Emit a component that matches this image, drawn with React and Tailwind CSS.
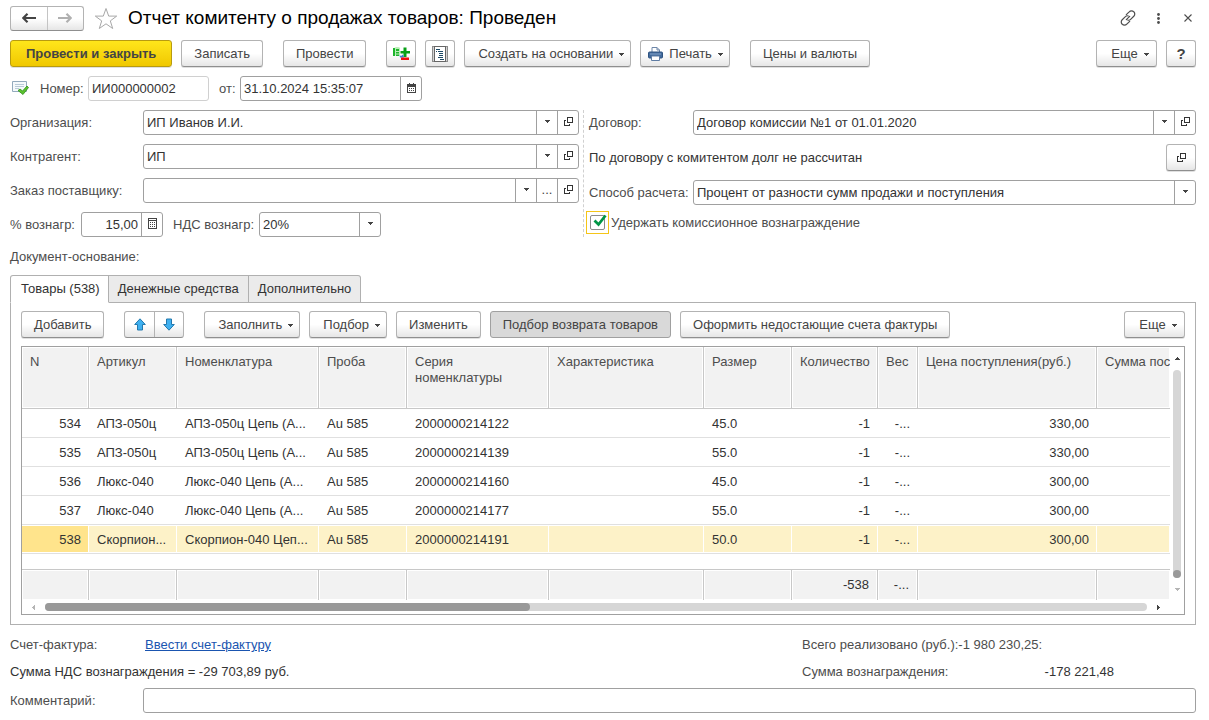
import { useState } from 'react';
import clsx from 'clsx';

const COLUMNS = [
    { key: 'n', title: 'N', width: 'w-[67px]', align: 'text-right' },
    { key: 'article', title: 'Артикул', width: 'w-[88px]' },
    { key: 'item', title: 'Номенклатура', width: 'w-[142px]' },
    { key: 'probe', title: 'Проба', width: 'w-[88px]' },
    { key: 'series', title: 'Серия номенклатуры', width: 'w-[142px]' },
    { key: 'feature', title: 'Характеристика', width: 'w-[155px]' },
    { key: 'size', title: 'Размер', width: 'w-[88px]' },
    { key: 'qty', title: 'Количество', width: 'w-[86px]', align: 'text-right' },
    { key: 'weight', title: 'Вес', width: 'w-[40px]', align: 'text-right' },
    { key: 'price', title: 'Цена поступления(руб.)', width: 'w-[179px]', align: 'text-right' },
    { key: 'sum', title: 'Сумма поступления', width: '' },
];

const ROWS = [
    { n: '534', article: 'АПЗ-050ц', item: 'АПЗ-050ц Цепь (А...', probe: 'Au 585', series: '2000000214122', size: '45.0', qty: '-1', weight: '-...', price: '330,00' },
    { n: '535', article: 'АПЗ-050ц', item: 'АПЗ-050ц Цепь (А...', probe: 'Au 585', series: '2000000214139', size: '55.0', qty: '-1', weight: '-...', price: '330,00' },
    { n: '536', article: 'Люкс-040', item: 'Люкс-040 Цепь (А...', probe: 'Au 585', series: '2000000214160', size: '45.0', qty: '-1', weight: '-...', price: '300,00' },
    { n: '537', article: 'Люкс-040', item: 'Люкс-040 Цепь (А...', probe: 'Au 585', series: '2000000214177', size: '55.0', qty: '-1', weight: '-...', price: '300,00' },
    { n: '538', article: 'Скорпион...', item: 'Скорпион-040 Цеп...', probe: 'Au 585', series: '2000000214191', size: '50.0', qty: '-1', weight: '-...', price: '300,00' },
];

const TOTALS = { qty: '-538', weight: '-...' };

const TABS = ['Товары (538)', 'Денежные средства', 'Дополнительно'];

/* ---------- icons ---------- */

function Caret({ className = '' }) {
    return (
        <svg width="5" height="3" viewBox="0 0 5 3" className={clsx('shrink-0', className)} shapeRendering="crispEdges" aria-hidden="true">
            <path d="M0 0h5v1H0zM1 1h3v1H1zM2 2h1v1H2z" fill="currentColor" />
        </svg>
    );
}

function OpenIcon() {
    return (
        <svg width="9" height="9" viewBox="0 0 9 9" fill="none" stroke="#333" className="shrink-0" shapeRendering="crispEdges" aria-hidden="true">
            <path d="M3.5 0.5h5v5h-5zM2 3.5H0.5v5h5V7" />
        </svg>
    );
}

function ArrowIcon({ flip, color }) {
    return (
        <svg width="14" height="10" viewBox="0 0 14 10" className={flip ? 'rotate-180' : ''} aria-hidden="true">
            <path d="M5.5 0.8L1.3 5l4.2 4.2M1.6 5H14" fill="none" stroke={color} strokeWidth="2.2" />
        </svg>
    );
}

function StarIcon() {
    return (
        <svg width="24" height="23" viewBox="0 0 24 23" aria-hidden="true">
            <path d="M12 1.5l2.7 7.6h8l-6.4 4.8 2.4 7.6L12 16.8l-6.7 4.7 2.4-7.6L1.3 9.1h8z" fill="#fff" stroke="#a8a8a8" />
        </svg>
    );
}

function LinkIcon() {
    return (
        <svg width="16" height="16" viewBox="0 0 16 16" fill="none" stroke="#4d4d4d" strokeWidth="1.2" strokeLinecap="round" aria-hidden="true">
            <path d="M6.3 4.7l2.9-2.9a3.1 3.1 0 0 1 4.6 0a3.1 3.1 0 0 1 0 4.5L10.6 9.4a2.6 2.6 0 0 1-2.9.6" />
            <path d="M9.7 11.3l-2.9 2.9a3.1 3.1 0 0 1-4.6 0a3.1 3.1 0 0 1 0-4.5L5.4 6.600a2.6 2.6 0 0 1 2.9-.6" />
            <path d="M6.3 9.7l3.4-3.4" />
        </svg>
    );
}

function DtKtIcon() {
    return (
        <svg width="17" height="15" viewBox="0 0 17 15" className="shrink-0" aria-hidden="true">
            <path d="M1 2.5c0-1.5 5-2 6-.5v7.5H1z" fill="#b9eeb6" />
            <path d="M0 2h2v8H0zM3 3h3v2H3zM3 6h3v1.500H3zM3 8.500h3V10H3z" fill="#1cb52b" />
            <path d="M10.500 1.500h3V5H17v2.600h-3.500V11h-3V7.600H7.500V5h3z" fill="#0aa018" />
            <path d="M6.500 9l1.500 1 2-1.500 1 3H7z" fill="#3d7fd0" />
            <path d="M8 11.500h8V14H8z" fill="#f01010" />
        </svg>
    );
}

function ReportIcon() {
    return (
        <svg width="16" height="16" viewBox="0 0 16 16" fill="none" className="shrink-0" shapeRendering="crispEdges" aria-hidden="true">
            <path d="M0.5 0.5h15v15h-15z" fill="#d4d4d4" stroke="#8c8c8c" />
            <path d="M2.5 0.5h11v15h-11z" fill="#fff" stroke="#666" />
            <path d="M4 3.5h4M6 5.5h5M7 7.5h4M7 9.5h4M6 11.5h5M8 13.5h4M4 5.5h1" stroke="#1d4a66" />
        </svg>
    );
}

function PrinterIcon() {
    return (
        <svg width="15" height="14" viewBox="0 0 15 14" className="shrink-0" aria-hidden="true">
            <path d="M4 5.5V.5h5L11.5 3v2.5" fill="#fff" stroke="#6d86a8" />
            <path d="M9 .5V3h2.5" fill="none" stroke="#6d86a8" />
            <rect x=".5" y="5" width="14" height="6" rx="1" fill="#426a9c" stroke="#2f5380" />
            <path d="M2 7h11" stroke="#86a5cb" />
            <path d="M3.5 9h8v4.5h-8z" fill="#fff" stroke="#5f7ca3" />
        </svg>
    );
}

function PostedIcon() {
    return (
        <svg width="17" height="15" viewBox="0 0 17 15" aria-hidden="true">
            <path d="M.5.5h14v10H.5z" fill="#f5f9fc" stroke="#93aabd" />
            <path d="M3 3.5h9M3 5.5h9M3 7.5h4" stroke="#b9cad8" />
            <path d="M6 9.5l2-1.500 2.500 2L15 5l1.500 1.500-5.500 7z" fill="#5cc22e" stroke="#2f8f1d" strokeWidth=".8" />
        </svg>
    );
}

function CalendarIcon() {
    return (
        <svg width="9" height="10" viewBox="0 0 9 10" shapeRendering="crispEdges" aria-hidden="true">
            <path d="M.5 1.5h8v8h-8z" fill="#fff" stroke="#444" />
            <path d="M0 1h9v3H0zM2 0h1v1H2zM6 0h1v1H6z" fill="#444" />
            <path d="M2 5h1v1H2zM4 5h1v1H4zM6 5h1v1H6zM2 7h1v1H2zM4 7h1v1H4zM6 7h1v1H6z" fill="#444" />
        </svg>
    );
}

function CalcIcon() {
    return (
        <svg width="9" height="11" viewBox="0 0 9 11" shapeRendering="crispEdges" aria-hidden="true">
            <path d="M.5.5h8v10h-8zM0 2.5h9" fill="none" stroke="#444" />
            <path d="M2 4h1v1H2zM4 4h1v1H4zM6 4h1v1H6zM2 6h1v1H2zM4 6h1v1H4zM6 6h1v1H6zM2 8h1v1H2zM4 8h1v1H4zM6 8h1v1H6z" fill="#444" />
        </svg>
    );
}

function MoveIcon({ flip }) {
    return (
        <svg width="12" height="13" viewBox="0 0 12 13" className={flip ? 'rotate-180' : ''} aria-hidden="true">
            <path d="M6 .8l5.3 5.7H8.5v5.5h-5V6.5H.7z" fill="#3fb0f0" stroke="#2378ad" />
        </svg>
    );
}

/* ---------- controls ---------- */

function Button({ children, className = '', pad = 'px-3', menu, variant = 'plain', ...rest }) {
    return (
        <button
            type="button"
            className={clsx(
                'flex h-[27px] shrink-0 items-center justify-center rounded-[3px] border whitespace-nowrap',
                pad,
                menu && 'gap-1.5',
                variant === 'plain' && 'border-[#b3b3b3] border-b-[#8f8f8f] bg-linear-to-b from-white from-50% to-[#e6e6e6] text-[#444] shadow-[0_1px_0_#e0e0e0]',
                variant === 'primary' && 'border-[#b89b10] bg-linear-to-b from-[#ffe61a] to-[#f0c800] font-bold text-[#444] shadow-[0_1px_0_#e0e0e0]',
                variant === 'pressed' && 'border-[#a0a0a0] bg-[#d9d9d9] text-[#444]',
                className
            )}
            {...rest}
        >
            {children}
            {menu && <Caret className="mt-0.5" />}
        </button>
    );
}

function MenuButton({ pad = 'pl-[13px] pr-1.5', ...rest }) {
    return <Button menu pad={pad} {...rest} />;
}

function IconButton({ label, children }) {
    return (
        <Button aria-label={label} pad="px-0" className="w-[30px]">
            {children}
        </Button>
    );
}

function Box({ children, className = '', border = 'border-[#a0a0a0]' }) {
    return (
        <div className={clsx('flex h-[25px] min-w-0 overflow-hidden rounded-[3px] border bg-white', border, className)}>
            {children}
        </div>
    );
}

function Cell({ label, children }) {
    return (
        <button type="button" aria-label={label} className="flex w-[21px] shrink-0 items-center justify-center border-l border-[#a0a0a0] pb-0.5 text-[#444]">
            {children}
        </button>
    );
}

function TextInput({ className = '', ...rest }) {
    return <input type="text" className={clsx('min-w-0 flex-1 bg-transparent px-[3px] text-[#333] outline-none', className)} {...rest} />;
}

function SelectBox({ id, options, className }) {
    return (
        <Box className={className}>
            <select id={id} className="min-w-0 flex-1 appearance-none bg-transparent px-[3px] text-[#333] outline-none">
                {options.map((option) => (
                    <option key={option}>{option}</option>
                ))}
            </select>
            <span className="pointer-events-none flex w-[21px] shrink-0 items-center justify-center border-l border-[#a0a0a0] pb-0.5 text-[#444]">
                <Caret />
            </span>
        </Box>
    );
}

function FieldRow({ id, label, value, dots }) {
    return (
        <div className="flex items-center">
            <label htmlFor={id} className="w-[133px] shrink-0">{label}</label>
            <Box className="flex-1">
                <TextInput id={id} defaultValue={value} />
                <Cell label="Выбрать из списка"><Caret /></Cell>
                {dots && <Cell label="Выбрать">...</Cell>}
                <Cell label="Открыть"><OpenIcon /></Cell>
            </Box>
        </div>
    );
}

/* ---------- page parts ---------- */

function TitleBar() {
    return (
        <header className="flex h-6 items-center">
            <div className="flex h-[25px] w-[74px] rounded-[3px] border border-[#b3b3b3] border-b-[#8f8f8f] bg-linear-to-b from-white from-50% to-[#e6e6e6]">
                <button type="button" aria-label="Назад" className="flex flex-1 items-center justify-center border-r border-[#c4c4c4]">
                    <ArrowIcon color="#444" />
                </button>
                <button type="button" aria-label="Вперед" className="flex flex-1 items-center justify-center">
                    <ArrowIcon color="#b0b0b0" flip />
                </button>
            </div>
            <button type="button" aria-label="В избранное" className="ml-2.5">
                <StarIcon />
            </button>
            <h1 className="ml-2.5 flex-1 text-[19px] leading-6 text-black">Отчет комитенту о продажах товаров: Проведен</h1>
            <div className="-mr-[7px] flex items-center">
                <button type="button" aria-label="Получить ссылку" className="flex w-[30px] justify-center">
                    <LinkIcon />
                </button>
                <button type="button" aria-label="Меню" className="flex w-[30px] justify-center">
                    <svg width="3" height="11" viewBox="0 0 3 11" fill="#4d4d4d" aria-hidden="true">
                        <circle cx="1.5" cy="1.5" r="1.4" />
                        <circle cx="1.5" cy="5.5" r="1.4" />
                        <circle cx="1.5" cy="9.5" r="1.4" />
                    </svg>
                </button>
                <button type="button" aria-label="Закрыть" className="flex w-[30px] justify-center">
                    <svg width="8" height="8" viewBox="0 0 8 8" stroke="#4d4d4d" strokeWidth="1.1" aria-hidden="true">
                        <path d="M.5.5l7 7M7.5.5l-7 7" />
                    </svg>
                </button>
            </div>
        </header>
    );
}

function CommandBar() {
    return (
        <div className="mt-2.5 flex gap-[9px]">
            <Button variant="primary" pad="px-[15px]">Провести и закрыть</Button>
            <Button>Записать</Button>
            <Button className="mx-[11px]">Провести</Button>
            <IconButton label="Показать проводки"><DtKtIcon /></IconButton>
            <IconButton label="Отчет"><ReportIcon /></IconButton>
            <MenuButton>Создать на основании</MenuButton>
            <MenuButton pad="pl-[7px] pr-1.5">
                <PrinterIcon />
                Печать
            </MenuButton>
            <Button className="ml-[11px]">Цены и валюты</Button>
            <div className="flex-1" />
            <MenuButton className="w-[61px]">Еще</MenuButton>
            <Button pad="px-0" className="w-[30px] text-[15px] font-bold" aria-label="Справка">?</Button>
        </div>
    );
}

function NumberRow() {
    return (
        <div className="mt-[9px] flex items-center">
            <span className="w-[30px] shrink-0 pl-0.5"><PostedIcon /></span>
            <label htmlFor="number" className="w-12 shrink-0">Номер:</label>
            <Box className="w-[121px]" border="border-[#d0d0d0]">
                <TextInput id="number" defaultValue="ИИ000000002" />
            </Box>
            <label htmlFor="date" className="ml-2.5 w-[21px] shrink-0">от:</label>
            <Box className="w-[182px]">
                <TextInput id="date" defaultValue="31.10.2024 15:35:07" />
                <Cell label="Календарь"><CalendarIcon /></Cell>
            </Box>
        </div>
    );
}

function Details() {
    return (
        <div className="mt-[9px] flex">
            <div className="flex w-[569px] shrink-0 flex-col gap-[9px]">
                <FieldRow id="org" label="Организация:" value="ИП Иванов И.И." />
                <FieldRow id="partner" label="Контрагент:" value="ИП" />
                <FieldRow id="order" label="Заказ поставщику:" value="" dots />
                <div className="flex items-center">
                    <label htmlFor="percent" className="w-[71px] shrink-0">% вознагр:</label>
                    <Box className="w-[82px]">
                        <TextInput id="percent" defaultValue="15,00" className="text-right" />
                        <Cell label="Калькулятор"><CalcIcon /></Cell>
                    </Box>
                    <label htmlFor="vat" className="ml-2.5 w-[86px] shrink-0">НДС вознагр:</label>
                    <SelectBox id="vat" options={['20%', '10%', 'Без НДС']} className="w-[122px]" />
                </div>
            </div>

            <div className="ml-1 flex min-w-0 flex-1 flex-col border-l border-dashed border-[#d0d0d0] pl-[5px]">
                <div className="flex items-center">
                    <label htmlFor="contract" className="w-[104px] shrink-0">Договор:</label>
                    <Box className="flex-1">
                        <TextInput id="contract" defaultValue="Договор комиссии №1 от 01.01.2020" />
                        <Cell label="Выбрать из списка"><Caret /></Cell>
                        <Cell label="Открыть"><OpenIcon /></Cell>
                    </Box>
                </div>
                <div className="mt-[9px] flex items-center justify-between text-[#333]">
                    По договору с комитентом долг не рассчитан
                    <IconButton label="Открыть расчеты"><OpenIcon /></IconButton>
                </div>
                <div className="mt-[9px] flex items-center">
                    <label htmlFor="method" className="w-[104px] shrink-0">Способ расчета:</label>
                    <SelectBox id="method" options={['Процент от разности сумм продажи и поступления', 'Процент от суммы продажи']} className="flex-1" />
                </div>
                <label className="mt-1.5 -ml-[3px] flex items-center gap-0.5">
                    <span className="relative flex size-[23px] items-center justify-center border border-[#f5c518]">
                        <input type="checkbox" defaultChecked className="peer size-[15px] appearance-none rounded-[2px] border border-[#8c8c8c] bg-white" />
                        <svg width="14" height="13" viewBox="0 0 14 13" className="pointer-events-none absolute top-0.5 left-1.5 hidden peer-checked:block" aria-hidden="true">
                            <path d="M1.5 6.5l4 4L12.500 1.500" fill="none" stroke="#009646" strokeWidth="2.8" />
                        </svg>
                    </span>
                    Удержать комиссионное вознаграждение
                </label>
            </div>
        </div>
    );
}

function GoodsToolbar() {
    return (
        <div className="flex gap-[9px]">
            <Button>Добавить</Button>
            <div className="mx-[11px] flex h-[27px] w-[60px] rounded-[3px] border border-[#b3b3b3] border-b-[#8f8f8f] bg-linear-to-b from-white from-50% to-[#e6e6e6]">
                <button type="button" aria-label="Переместить вверх" className="flex flex-1 items-center justify-center border-r border-[#b3b3b3]">
                    <MoveIcon />
                </button>
                <button type="button" aria-label="Переместить вниз" className="flex flex-1 items-center justify-center">
                    <MoveIcon flip />
                </button>
            </div>
            <MenuButton>Заполнить</MenuButton>
            <MenuButton>Подбор</MenuButton>
            <Button>Изменить</Button>
            <Button variant="pressed">Подбор возврата товаров</Button>
            <Button>Оформить недостающие счета фактуры</Button>
            <div className="flex-1" />
            <MenuButton className="w-[61px]">Еще</MenuButton>
        </div>
    );
}

function GoodsTable() {
    const [selected, setSelected] = useState('538');

    return (
        <div className="mt-2 border border-[#a0a0a0] bg-white">
            <div className="flex">
                <div className="min-w-0 flex-1 overflow-hidden">
                    <table className="w-full table-fixed border-separate border-spacing-0 text-[#333]">
                        <colgroup>
                            {COLUMNS.map((col) => (
                                <col key={col.key} className={col.width} />
                            ))}
                        </colgroup>
                        <thead>
                            <tr>
                                {COLUMNS.map((col) => (
                                    <th
                                        key={col.key}
                                        className="h-[62px] overflow-hidden border-r border-b border-[#c8c8c8] bg-[#f2f2f2] px-2 pt-[7px] text-left align-top leading-4 font-normal text-[#4d4d4d] shadow-[inset_0_0_0_1px_#fff] last:border-r-0 last:pr-0 last:whitespace-nowrap"
                                    >
                                        {col.title}
                                    </th>
                                ))}
                            </tr>
                        </thead>
                        <tbody>
                            {ROWS.map((row) => (
                                <tr key={row.n} onClick={() => setSelected(row.n)}>
                                    {COLUMNS.map((col) => (
                                        <td
                                            key={col.key}
                                            className={clsx(
                                                'h-[29px] overflow-hidden border-b border-[#e0e0e0] px-2 pt-0.5 whitespace-nowrap',
                                                col.align,
                                                row.n === selected && 'shadow-[inset_-1px_0_0_#fff,inset_0_1px_0_#fff,inset_0_-1px_0_#fff]',
                                                row.n === selected && (col.key === 'n' ? 'bg-[#ffe48c]' : 'bg-[#fdf2c8]')
                                            )}
                                        >
                                            {row[col.key]}
                                        </td>
                                    ))}
                                </tr>
                            ))}
                            <tr>
                                <td colSpan={COLUMNS.length} className="h-[15px]" />
                            </tr>
                        </tbody>
                        <tfoot>
                            <tr>
                                {COLUMNS.map((col) => (
                                    <td
                                        key={col.key}
                                        className={clsx(
                                            'h-[31px] overflow-hidden border-t border-r border-[#c8c8c8] bg-[#f2f2f2] px-2 whitespace-nowrap shadow-[inset_0_0_0_1px_#fff] last:border-r-0',
                                            col.align
                                        )}
                                    >
                                        {TOTALS[col.key]}
                                    </td>
                                ))}
                            </tr>
                        </tfoot>
                    </table>
                </div>

                <div className="flex w-[14px] shrink-0 flex-col items-center">
                    <button type="button" aria-label="Прокрутить вверх" className="flex h-[23px] items-center text-[#444]">
                        <Caret className="rotate-180" />
                    </button>
                    <div className="flex w-2 flex-1 flex-col justify-end rounded-full bg-[#d6d6d6]">
                        <div className="size-2 rounded-full bg-[#999]" />
                    </div>
                    <button type="button" aria-label="Прокрутить вниз" className="flex h-[22px] items-center text-[#b5b5b5]">
                        <Caret />
                    </button>
                </div>
            </div>

            <div className="flex h-[14px] items-center pr-[14px]">
                <button type="button" aria-label="Прокрутить влево" className="flex w-[23px] justify-center text-[#b5b5b5]">
                    <Caret className="rotate-90" />
                </button>
                <div className="h-2 flex-1 rounded-full bg-[#d6d6d6]">
                    <div className="h-2 w-[44%] rounded-full bg-[#999]" />
                </div>
                <button type="button" aria-label="Прокрутить вправо" className="flex w-[23px] justify-center text-[#444]">
                    <Caret className="-rotate-90" />
                </button>
            </div>
        </div>
    );
}

function Summary() {
    return (
        <footer className="mt-2.5">
            <div className="flex">
                <div className="flex flex-1 flex-col gap-[7px]">
                    <div className="flex leading-5">
                        <span className="w-[135px]">Счет-фактура:</span>
                        <a href="#invoice" className="text-[#1a55b0] underline">Ввести счет-фактуру</a>
                    </div>
                    <div className="leading-5 text-[#333]">Сумма НДС вознаграждения = -29 703,89 руб.</div>
                </div>
                <div className="flex w-[394px] flex-col gap-[7px] leading-5">
                    <div>Всего реализовано (руб.):-1 980 230,25:</div>
                    <div className="flex w-[312px] justify-between">
                        <span>Сумма вознаграждения:</span>
                        <span className="text-[#333]">-178 221,48</span>
                    </div>
                </div>
            </div>
            <div className="mt-1.5 flex items-center">
                <label htmlFor="comment" className="w-[133px] shrink-0">Комментарий:</label>
                <Box className="flex-1">
                    <TextInput id="comment" />
                </Box>
            </div>
        </footer>
    );
}

export default function App() {
    const [tab, setTab] = useState(0);

    return (
        <div className="min-h-screen bg-white pt-1.5 pr-[13px] pb-1.5 pl-2.5 font-['Liberation_Sans',Arial,sans-serif] text-[13px] leading-4 text-[#4d4d4d]">
            <TitleBar />
            <CommandBar />
            <NumberRow />
            <Details />
            <div className="mt-3">Документ-основание:</div>

            <div role="tablist" className="mt-2.5 flex">
                {TABS.map((title, i) => (
                    <button
                        key={title}
                        type="button"
                        role="tab"
                        aria-selected={i === tab}
                        onClick={() => setTab(i)}
                        className={clsx(
                            '-mb-px h-7 border border-l-0 border-[#b0b0b0] px-[9px] text-[#333] first:rounded-tl-[3px] first:border-l first:pr-2 first:pl-2.5 last:rounded-tr-[3px]',
                            i === tab ? 'border-b-white bg-white' : 'bg-[#ebebeb]'
                        )}
                    >
                        {title}
                    </button>
                ))}
            </div>
            <section className="border border-[#b0b0b0] px-2.5 pt-2 pb-[9px]">
                <GoodsToolbar />
                <GoodsTable />
            </section>

            <Summary />
        </div>
    );
}
